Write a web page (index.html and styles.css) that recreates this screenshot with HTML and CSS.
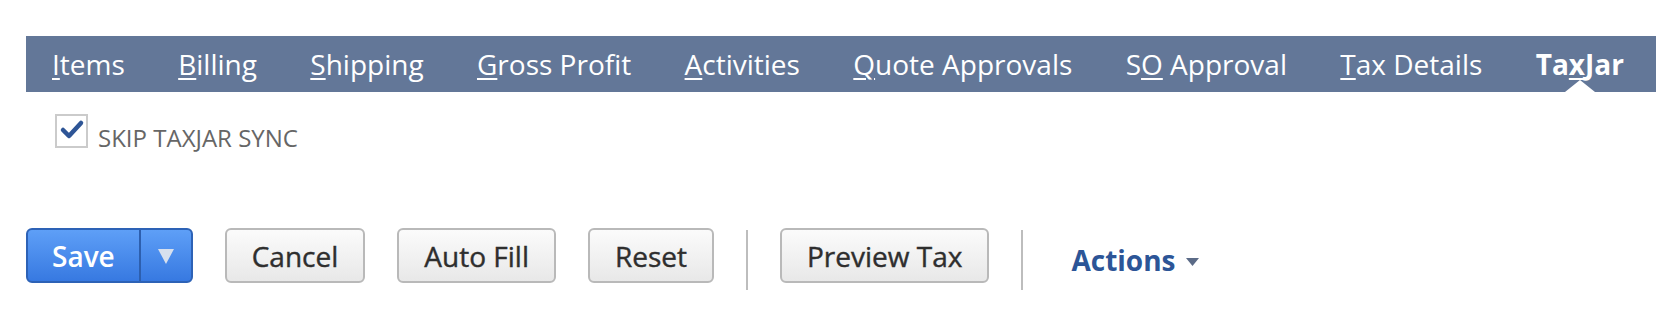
FILE: index.html
```html
<!DOCTYPE html>
<html>
<head>
<meta charset="utf-8">
<link rel="stylesheet" href="styles.css">
</head>
<body>
<nav class="tabs">
  <span class="tab"><span class="tab-text"><u>I</u>tems</span></span>
  <span class="tab"><span class="tab-text"><u>B</u>illing</span></span>
  <span class="tab"><span class="tab-text"><u>S</u>hipping</span></span>
  <span class="tab"><span class="tab-text"><u>G</u>ross Profit</span></span>
  <span class="tab"><span class="tab-text"><u>A</u>ctivities</span></span>
  <span class="tab"><span class="tab-text"><u>Q</u>uote Approvals</span></span>
  <span class="tab"><span class="tab-text">S<u>O</u> Approval</span></span>
  <span class="tab"><span class="tab-text"><u>T</u>ax Details</span></span>
  <span class="tab active"><span class="tab-text">Ta<u>x</u>Jar</span></span>
</nav>
<div class="field">
  <span class="checkbox">
    <svg width="29" height="30" viewBox="0 0 29 30"><path d="M6 15 L12 21 L24 8" fill="none" stroke="#2e5596" stroke-width="4.5" stroke-linecap="round" stroke-linejoin="round"/></svg>
  </span>
  <span class="label">SKIP TAXJAR SYNC</span>
</div>
<div class="buttons">
  <div class="btn save">
    <span class="save-main">Save</span>
    <span class="save-split"><svg width="16" height="16" viewBox="0 0 16 16"><polygon points="0,1 16,1 8,16" fill="#d7e0ee"/></svg></span>
  </div>
  <div class="btn">Cancel</div>
  <div class="btn">Auto Fill</div>
  <div class="btn">Reset</div>
  <div class="divider"></div>
  <div class="btn">Preview Tax</div>
  <div class="divider"></div>
  <div class="actions">Actions<svg width="13" height="8" viewBox="0 0 13 8"><polygon points="0,0 13,0 6.5,8" fill="#5b6b87"/></svg></div>
</div>
</body>
</html>
```

FILE: styles.css
```css
html, body {
  margin: 0;
  padding: 0;
  background: #ffffff;
  font-family: "Open Sans", "Liberation Sans", sans-serif;
}

.tabs {
  margin: 36px 0 0 26px;
  height: 56px;
  background: #637798;
  display: flex;
  align-items: center;
}

.tab {
  position: relative;
  height: 56px;
  display: flex;
  align-items: center;
  padding: 0 26.7px;
  color: #ffffff;
  font-size: 28px;
  white-space: nowrap;
}

.tab:first-child {
  padding-left: 26px;
}

.tab u {
  text-decoration: underline;
  text-decoration-thickness: 2px;
  text-underline-offset: 3px;
}

.tab.active {
  font-weight: 700;
}

.tab.active::after {
  content: "";
  position: absolute;
  bottom: 0;
  left: 50%;
  margin-left: -15px;
  border-left: 15px solid transparent;
  border-right: 15px solid transparent;
  border-bottom: 12px solid #ffffff;
}

.field {
  margin: 22px 0 0 55px;
  display: flex;
  align-items: flex-start;
  gap: 10px;
}

.checkbox {
  width: 33px;
  height: 34px;
  box-sizing: border-box;
  border: 2px solid #cbcbcb;
  background: #ffffff;
  display: flex;
  align-items: center;
  justify-content: center;
}

.checkbox svg {
  margin-top: -2px;
}

.label {
  margin-top: 8px;
  font-size: 24px;
  line-height: 32px;
  color: #666666;
}

.buttons {
  margin: 74px 0 0 26px;
  display: flex;
  align-items: flex-start;
  gap: 32px;
}

.btn {
  height: 55px;
  box-sizing: border-box;
  border: 2px solid #b9b9b9;
  border-radius: 6px;
  background: linear-gradient(#fbfbfb, #e8e8e8);
  padding: 0 25px;
  display: flex;
  align-items: center;
  font-size: 28px;
  font-weight: 400;
  -webkit-text-stroke: 0.4px currentColor;
  color: #2e2e2e;
  white-space: nowrap;
}

.btn.save {
  padding: 0;
  border-color: #2d62b6;
  background: linear-gradient(#5e9ff7, #3779e1);
  color: #ffffff;
  -webkit-text-stroke: 0;
}

.save-main {
  padding: 0 24px;
  height: 100%;
  display: flex;
  align-items: center;
  font-weight: 600;
}

.save-split {
  width: 50px;
  height: 100%;
  border-left: 2px solid #2d5fae;
  display: flex;
  align-items: center;
  justify-content: center;
}

.divider {
  width: 2px;
  height: 60px;
  margin-top: 2px;
  background: #bdbdbd;
}

.actions {
  margin-top: 13px;
  margin-left: 16px;
  display: flex;
  align-items: center;
  gap: 10px;
  font-size: 28px;
  line-height: 38px;
  font-weight: 700;
  color: #2c5597;
}

.actions svg {
  margin-top: 4px;
}
```
